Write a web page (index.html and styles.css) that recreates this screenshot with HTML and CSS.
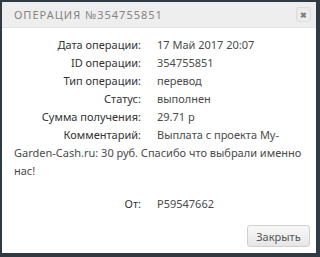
FILE: index.html
```html
<!DOCTYPE html>
<html>
<head>
<meta charset="utf-8">
<link rel="stylesheet" href="styles.css">
</head>
<body>
<div class="dialog">
  <div class="titlebar">
    <span class="title">Операция №354755851</span>
    <span class="close">&#10006;</span>
  </div>
  <div class="content">
    <div class="row"><span class="label">Дата операции:</span><span class="value">17 Май 2017 20:07</span></div>
    <div class="row"><span class="label">ID операции:</span><span class="value">354755851</span></div>
    <div class="row"><span class="label">Тип операции:</span><span class="value">перевод</span></div>
    <div class="row"><span class="label">Статус:</span><span class="value">выполнен</span></div>
    <div class="row"><span class="label">Сумма получения:</span><span class="value">29.71 р</span></div>
    <div class="row"><span class="label">Комментарий:</span><span class="value">Выплата с проекта My-</span></div>
    <p class="comment">Garden-Cash.ru: 30 руб. Спасибо что выбрали именно нас!</p>
    <div class="row from"><span class="label">От:</span><span class="value">P59547662</span></div>
  </div>
  <div class="footer">
    <button class="btn">Закрыть</button>
  </div>
</div>
</body>
</html>
```
FILE: styles.css
```css
html, body {
  margin: 0;
  padding: 0;
  background: #2f3a42;
}
.dialog {
  width: 314px;
  height: 251px;
  margin: 2px 3px 4px 2px;
  background: #fff;
  display: flex;
  flex-direction: column;
  font-family: "Noto Sans", sans-serif;
}
.titlebar {
  height: 25px;
  background: #eeeeee;
  border-bottom: 1px solid #e2e2e2;
  display: flex;
  align-items: center;
  justify-content: space-between;
  padding: 0 5px 0 12px;
}
.title {
  text-transform: uppercase;
  color: #858585;
  font-size: 11px;
  letter-spacing: 1px;
}
.close {
  width: 13px;
  height: 13px;
  border: 1px solid #dcdcdc;
  border-radius: 3px;
  background: #ececec;
  color: #808080;
  font-size: 8px;
  line-height: 13px;
  text-align: center;
  font-weight: bold;
}
.content {
  padding: 8px 12px 0 12px;
  color: #333;
  font-size: 11px;
  line-height: 18px;
  flex: 1;
}
.label {
  display: inline-block;
  width: 127px;
  text-align: right;
  margin-right: 16px;
  color: #333;
}
.value {
  color: #4a4a4a;
}
.comment {
  margin: 0;
  color: #4a4a4a;
}
.from {
  margin-top: 15px;
}
.footer {
  display: flex;
  justify-content: flex-end;
  padding: 0 6px 6px 0;
}
.btn {
  width: 63px;
  height: 22px;
  border: 1px solid #d0d0d0;
  border-radius: 3px;
  background: linear-gradient(#f8f8f8, #e6e6e6);
  color: #555;
  font-family: "Noto Sans", sans-serif;
  font-size: 11px;
  padding: 0;
}
```
